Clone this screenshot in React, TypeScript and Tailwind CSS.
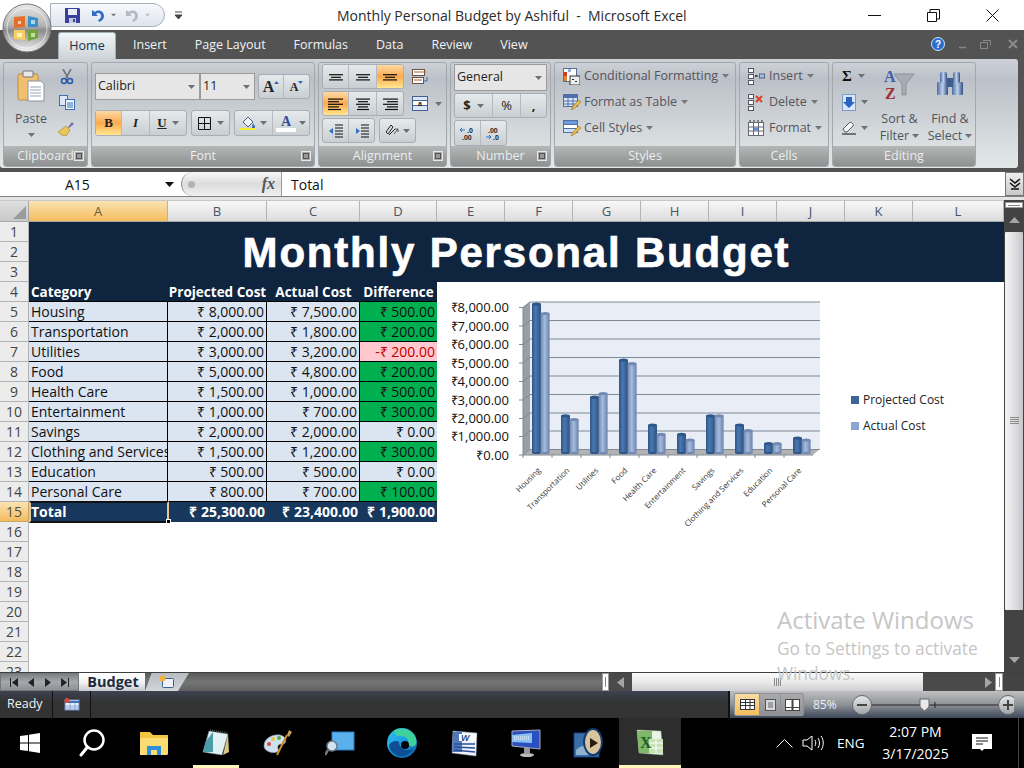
import React from "react";

const Caret = ({ c = "#6b7178", cls = "" }: { c?: string; cls?: string }) => (
  <svg width="7" height="4" viewBox="0 0 7 4" className={"shrink-0 " + cls}><path d="M0 0h7L3.5 4z" fill={c} /></svg>
);

const Lines = ({ rows }: { rows: [number, number][] }) => (
  <svg width="18" height="16" viewBox="0 0 18 16">
    {rows.map(([x, w], i) => (
      <rect key={i} x={x} y={i * 2.6 + 1 + (16 - rows.length * 2.6) / 2} width={w} height="1.2" fill="#111" />
    ))}
  </svg>
);

const Office = () => (
  <svg width="52" height="52" viewBox="0 0 52 52" className="absolute left-[1px] top-[2px] z-10">
    <defs>
      <linearGradient id="orb" x1="0" y1="0" x2="0" y2="1">
        <stop offset="0" stopColor="#e8e8e8" /><stop offset=".45" stopColor="#b3b3b3" /><stop offset=".55" stopColor="#8c8c8c" /><stop offset="1" stopColor="#f2f2f2" />
      </linearGradient>
    </defs>
    <circle cx="26" cy="26" r="24" fill="url(#orb)" stroke="#777" />
    <circle cx="26" cy="26" r="20" fill="none" stroke="#fff" strokeOpacity=".6" />
    <path d="M13 15l11-1v11l-11 1z" fill="#e2702c" /><path d="M17 19h3v3h-3z" fill="#f3c7a8" />
    <path d="M27 14l10 2v9H27z" fill="#3d8fc6" /><path d="M30 18h4v4h-4z" fill="#a9d6ee" />
    <path d="M13 28h11v10l-11-1z" fill="#f5cf62" /><path d="M16 31h5v4h-5z" fill="#fdf2c6" />
    <path d="M27 28h10v8l-10 3z" fill="#6fa63a" /><path d="M30 31h4v4h-4z" fill="#c2dfa2" />
  </svg>
);

const Save = () => (
  <svg width="15" height="15" viewBox="0 0 15 15"><path d="M0 0h14l1 1v14H0z" fill="#3a3f9c" /><path d="M3 1h9v6H3z" fill="#e8ecf6" /><path d="M4 10h7v5H4z" fill="#c3c9e0" /><path d="M8 11h2v3H8z" fill="#3a3f9c" /></svg>
);
const Undo = ({ c }: { c: string }) => (
  <svg width="13" height="13" viewBox="0 0 13 13"><path d="M1 1v6h6L5 5c2-2 5-1 5 2 0 2-1 3-3 4l1 2c3-1 5-3 5-6 0-5-6-7-9-4z" fill={c} /></svg>
);

const Tab = ({ t }: { t: string }) => <span className="px-[14px] text-[12.5px] text-[#eef2f6]">{t}</span>;

const Group = ({ w, label, launcher = true, children, ml = "ml-[3px]" }: { w: string; label: string; launcher?: boolean; children: React.ReactNode; ml?: string }) => (
  <div className={`${w} ${ml} flex h-[105px] shrink-0 flex-col overflow-hidden rounded-[3px] border border-[#a3a8ad] bg-gradient-to-b from-[#cdd1d7] via-[#bcc0c8] via-15% to-[#e3e9e9]`}>
    <div className="min-h-0 flex-1">{children}</div>
    <div className="relative flex h-[20px] items-center justify-center bg-gradient-to-b from-[#b5b7b7] to-[#8f9090] text-[12.5px] leading-none text-[#e9eef0]">
      {label}
      {launcher && (
        <svg width="10" height="10" viewBox="0 0 10 10" className="absolute right-[3px] top-[5px]"><rect x=".5" y=".5" width="9" height="9" fill="#aaa" stroke="#e8e8e8" /><rect x="2.5" y="2.5" width="5" height="5" fill="#999" stroke="#555" /></svg>
      )}
    </div>
  </div>
);

const BtnRow = ({ children, cls = "" }: { children: React.ReactNode; cls?: string }) => (
  <div className={"flex overflow-hidden rounded-[3px] border border-[#a8aeb3] bg-gradient-to-b from-[#e6eaec] to-[#c8ced2] " + cls}>{children}</div>
);
const Btn = ({ w, on, last, children }: { w: string; on?: boolean; last?: boolean; children: React.ReactNode }) => (
  <div className={`${w} flex items-center justify-center gap-[3px] ${last ? "" : "border-r border-[#b4babf]"} ${on ? "bg-gradient-to-b from-[#fcd9a2] via-[#fba94c] to-[#ffe78f]" : ""}`}>{children}</div>
);

const Select = ({ w, text }: { w: string; text: string }) => (
  <div className={`${w} flex h-full items-center justify-between border border-[#9b9b9b] bg-[#e6e6e6] pl-[2px] pr-[4px] text-[12.5px] text-[#222]`}>
    <span>{text}</span><Caret />
  </div>
);

const StyleItem = ({ icon, text }: { icon: React.ReactNode; text: string }) => (
  <div className="flex h-[26px] items-center text-[12.5px] text-[#57545c]">
    <div className="w-[21px] shrink-0">{icon}</div><span>{text}</span><Caret c="#777" cls="ml-[4px]" />
  </div>
);

const IconCF = () => (
  <svg width="17" height="17" viewBox="0 0 17 17"><rect x=".5" y=".5" width="13" height="13" fill="#fff" stroke="#5a6f96" /><path d="M1 4h3v4H1z" fill="#d9381e" /><path d="M1 8h3v5H1z" fill="#e87f2a" /><path d="M5 1h3v3H5z" fill="#8fb0d8" /><rect x="7" y="8" width="10" height="9" fill="#eee" stroke="#333" /><path d="M9 11h2v1H9zM12 13h2v1h-2z" fill="#222" /></svg>
);
const IconFT = () => (
  <svg width="18" height="17" viewBox="0 0 18 17"><rect x=".5" y=".5" width="14" height="12" fill="#dfe8f6" stroke="#4f6fa8" /><path d="M1 1h13v3H1z" fill="#4f6fa8" /><path d="M5 1v12M10 1v12M1 7h13M1 10h13" stroke="#4f6fa8" /><path d="M8 16l2-4 6-6 2 2-6 6z" fill="#e9b949" stroke="#8a6a1c" strokeWidth=".5" /></svg>
);
const IconCS = () => (
  <svg width="18" height="17" viewBox="0 0 18 17"><rect x=".5" y=".5" width="14" height="4" fill="#6f9bd8" stroke="#4f6fa8" /><rect x=".5" y="4.5" width="14" height="4" fill="#fff" stroke="#4f6fa8" /><rect x=".5" y="8.5" width="14" height="4" fill="#cfe0f6" stroke="#4f6fa8" /><path d="M8 16l2-4 6-6 2 2-6 6z" fill="#e9b949" stroke="#8a6a1c" strokeWidth=".5" /></svg>
);
const CellsBase = () => (
  <>
    <rect x=".5" y=".5" width="5" height="4" fill="#fff" stroke="#556" /><rect x=".5" y="6.5" width="5" height="4" fill="#fff" stroke="#556" /><rect x=".5" y="12.5" width="5" height="4" fill="#fff" stroke="#556" />
  </>
);
const IconInsert = () => (
  <svg width="17" height="17" viewBox="0 0 17 17"><CellsBase /><rect x="11.5" y="6" width="5" height="4" fill="#9cc2ea" stroke="#567" /><path d="M7 8h3M8 7v2" stroke="#223" /></svg>
);
const IconDelete = () => (
  <svg width="17" height="17" viewBox="0 0 17 17"><CellsBase /><path d="M8 2l6 6M14 2L8 8" stroke="#e0402a" strokeWidth="2" /></svg>
);
const IconFormat = () => (
  <svg width="17" height="17" viewBox="0 0 17 17"><rect x=".5" y="2.5" width="15" height="13" fill="#fff" stroke="#667" /><path d="M.5 7h15M.5 11h15M5.5 2.5v13M10.5 2.5v13" stroke="#667" /><rect x="6" y="7.5" width="4" height="3" fill="#5b8fdc" /><path d="M2 0v2M6 0v2M10 0v2M14 0v2" stroke="#333" /></svg>
);

const TaskIcon = ({ children, on, bar }: { children: React.ReactNode; on?: boolean; bar?: boolean }) => (
  <div className={`relative flex h-[50px] w-[62px] items-center justify-center ${on ? "bg-[#2d2d2d]" : ""}`}>
    {children}
    {bar && <div className="absolute bottom-0 left-[8px] right-[8px] h-[3px] bg-[#fdf6b8]" />}
    {on && <div className="absolute bottom-0 left-0 right-0 h-[3px] bg-[#fdf6b8]" />}
  </div>
);

const rows: [string, string, string, string, "g" | "p" | "n"][] = [
  ["Housing", "₹ 8,000.00", "₹ 7,500.00", "₹ 500.00", "g"],
  ["Transportation", "₹ 2,000.00", "₹ 1,800.00", "₹ 200.00", "g"],
  ["Utilities", "₹ 3,000.00", "₹ 3,200.00", "-₹ 200.00", "p"],
  ["Food", "₹ 5,000.00", "₹ 4,800.00", "₹ 200.00", "g"],
  ["Health Care", "₹ 1,500.00", "₹ 1,000.00", "₹ 500.00", "g"],
  ["Entertainment", "₹ 1,000.00", "₹ 700.00", "₹ 300.00", "g"],
  ["Savings", "₹ 2,000.00", "₹ 2,000.00", "₹ 0.00", "n"],
  ["Clothing and Services", "₹ 1,500.00", "₹ 1,200.00", "₹ 300.00", "g"],
  ["Education", "₹ 500.00", "₹ 500.00", "₹ 0.00", "n"],
  ["Personal Care", "₹ 800.00", "₹ 700.00", "₹ 100.00", "g"],
];

const cols: [string, string][] = [
  ["A", "w-[139px]"], ["B", "w-[99px]"], ["C", "w-[93px]"], ["D", "w-[77px]"], ["E", "w-[68px]"], ["F", "w-[68px]"],
  ["G", "w-[68px]"], ["H", "w-[68px]"], ["I", "w-[68px]"], ["J", "w-[68px]"], ["K", "w-[68px]"], ["L", "w-[91px]"],
];

const chartData: [string, number, number][] = [
  ["Housing", 8000, 7500], ["Transportation", 2000, 1800], ["Utilities", 3000, 3200], ["Food", 5000, 4800], ["Health Care", 1500, 1000],
  ["Entertainment", 1000, 700], ["Savings", 2000, 2000], ["Clothing and Services", 1500, 1200], ["Education", 500, 500], ["Personal Care", 800, 700],
];

const Cyl = ({ x, v, id, top }: { x: number; v: number; id: string; top: string }) => {
  const h = v * 0.0186;
  const y = 453 - h;
  return (
    <g>
      <rect x={x} y={y} width="9" height={h} fill={`url(#${id})`} />
      <ellipse cx={x + 4.5} cy={453} rx="4.5" ry="1" fill={top} />
      <ellipse cx={x + 4.5} cy={y} rx="4.5" ry="1.6" fill={top} />
    </g>
  );
};

const Chart = () => {
  const ys = [302, 320.5, 339, 357.5, 376, 394.5, 413, 431, 449.5];
  const labels = ["₹8,000.00", "₹7,000.00", "₹6,000.00", "₹5,000.00", "₹4,000.00", "₹3,000.00", "₹2,000.00", "₹1,000.00", "₹0.00"];
  return (
    <svg width="530" height="250" viewBox="440 290 530 250" className="absolute left-[440px] top-[90px]">
      <defs>
        <linearGradient id="p1"><stop offset="0" stopColor="#2f5688" /><stop offset=".4" stopColor="#4a78b0" /><stop offset="1" stopColor="#2c5181" /></linearGradient>
        <linearGradient id="p2"><stop offset="0" stopColor="#6f87ae" /><stop offset=".45" stopColor="#a6bbdf" /><stop offset="1" stopColor="#6a82aa" /></linearGradient>
      </defs>
      <path d="M530 302H820V449H530z" fill="#e8edf6" />
      <path d="M523 307l7-5V449l-7 6z" fill="#9a9fa5" />
      <path d="M523 455l7-6H820l-7 6z" fill="#b3b3b3" />
      {ys.map((y, i) => (
        <g key={i}>
          <path d={`M530 ${y}H820`} stroke="#7f8a96" strokeWidth="1" />
          <path d={`M519 ${y + 5.5}h4l7 -5.5`} stroke="#7f8a96" fill="none" />
          <text x="509" y={y + 10} textAnchor="end" fontSize="13" fontFamily="'Open Sans',sans-serif" fill="#111">{labels[i]}</text>
        </g>
      ))}
      <path d="M523 307V455H813" stroke="#7f8a96" fill="none" />
      {chartData.map(([n, a, b], i) => {
        const x = 532 + i * 29;
        return (
          <g key={n}>
            <path d={`M${x - 9} 455v3`} stroke="#7f8a96" />
            <Cyl x={x} v={a} id="p1" top="#2f5688" />
            <Cyl x={x + 8.6} v={b} id="p2" top="#7189b3" />
            <text transform={`translate(${x + 9} 471) rotate(-45)`} textAnchor="end" fontSize="8" fontFamily="'Open Sans',sans-serif" fill="#333">{n}</text>
          </g>
        );
      })}
      <rect x="851" y="396" width="8" height="8" fill="#3b659b" />
      <rect x="851" y="422" width="8" height="8" fill="#8ea7d2" />
      <text x="863" y="404" fontSize="12" fontFamily="'Open Sans',sans-serif" fill="#222">Projected Cost</text>
      <text x="863" y="430" fontSize="12" fontFamily="'Open Sans',sans-serif" fill="#222">Actual Cost</text>
    </svg>
  );
};

export default function App() {
  return (
    <div className="relative flex h-[768px] w-[1024px] flex-col overflow-hidden bg-[#535353] font-['Open_Sans',sans-serif]">
      {/* title bar */}
      <div className="flex h-[30px] items-center bg-white">
        <div className="ml-[50px] flex h-[24px] w-[115px] items-center gap-[3px] rounded-r-[12px] border border-[#a9b0bb] bg-gradient-to-b from-[#f7f9fc] to-[#dfe4ee] pl-[14px]">
          <Save />
          <div className="ml-[8px]"><Undo c="#2f6fc4" /></div>
          <Caret c="#777" cls="ml-[3px] scale-75" />
          <div className="ml-[5px]"><Undo c="#b3bac4" /></div>
          <Caret c="#bbb" cls="ml-[3px] scale-75" />
        </div>
        <svg width="8" height="9" viewBox="0 0 8 9" className="ml-[10px]"><path d="M0 1h7M0 4h7L3.5 8z" stroke="#444" fill="#444" /></svg>
        <div className="ml-[154px] whitespace-pre text-[14px] text-[#2b2b2b]">Monthly Personal Budget by Ashiful  -  Microsoft Excel</div>
        <div className="ml-auto mr-[25px] flex items-center gap-[46px]">
          <svg width="13" height="13" viewBox="0 0 13 13"><path d="M0 6.5h13" stroke="#111" /></svg>
          <svg width="13" height="13" viewBox="0 0 13 13"><path d="M.5 3.5h9v9h-9zM3 3V.5h9.5V10H10" stroke="#111" fill="none" /></svg>
          <svg width="13" height="13" viewBox="0 0 13 13"><path d="M.5.5l12 12M12.5.5l-12 12" stroke="#111" /></svg>
        </div>
      </div>
      <Office />

      {/* tabs */}
      <div className="relative flex h-[29px] items-end bg-[#535353] pl-[58px]">
        <div className="flex h-[27px] w-[58px] items-center justify-center rounded-t-[3px] border border-b-0 border-[#9fb2b8] bg-gradient-to-b from-[#f2f6f7] to-[#cdd3d8] text-[12.5px] text-[#15304f]">Home</div>
        <div className="ml-[3px] flex h-[28px] items-center">
          <Tab t="Insert" /><Tab t="Page Layout" /><Tab t="Formulas" /><Tab t="Data" /><Tab t="Review" /><Tab t="View" />
        </div>
        <div className="ml-auto mr-[6px] flex h-[28px] items-center gap-[13px] pb-[2px]">
          <svg width="14" height="14" viewBox="0 0 14 14"><circle cx="7" cy="7" r="6.5" fill="#2a6fd0" stroke="#cfe0f5" /><text x="7" y="10.5" textAnchor="middle" fontSize="10" fontWeight="700" fill="#fff" fontFamily="'Liberation Sans',sans-serif">?</text></svg>
          <svg width="9" height="9" viewBox="0 0 9 9"><path d="M1 7.5h7" stroke="#888" strokeWidth="1.5" /></svg>
          <svg width="11" height="9" viewBox="0 0 11 9"><path d="M.5 2.5h7v6h-7zM3 .5h7.5v5" stroke="#888" fill="none" /></svg>
          <svg width="10" height="10" viewBox="0 0 10 10" className="ml-[4px]"><path d="M1 1l8 8M9 1L1 9" stroke="#8d8d8d" strokeWidth="2" /></svg>
        </div>
      </div>

      {/* ribbon */}
      <div className="mr-[6px] flex h-[109px] items-start rounded-b-[3px] rounded-tr-[3px] bg-gradient-to-b from-[#cdd1d7] via-[#bcc0c8] via-20% to-[#e3e9e9] pt-[3px]">
        <Group w="w-[85px]" label="Clipboard" ml="ml-[3px]">
          <div className="flex">
            <div className="flex w-[54px] flex-col items-center pt-[7px]">
              <svg width="28" height="32" viewBox="0 0 28 32">
                <rect x="1" y="4" width="20" height="26" rx="2" fill="#f0c070" stroke="#c08a3c" />
                <rect x="6" y="1" width="10" height="6" rx="1" fill="#e8e8e8" stroke="#777" />
                <path d="M11 11h13l3 3v17H11z" fill="#fff" stroke="#8a94a3" />
                <path d="M13 17h11M13 20h11M13 23h11M13 26h11" stroke="#9aa5b5" />
              </svg>
              <span className="mt-[9px] text-[12.5px] leading-[16px] text-[#4e5560]">Paste</span>
              <Caret cls="mt-[6px]" />
            </div>
            <div className="flex flex-col items-center gap-[10px] pt-[6px]">
              <svg width="14" height="16" viewBox="0 0 14 16"><path d="M3 0l5 9M11 0L6 9" stroke="#6f7680" strokeWidth="1.6" /><circle cx="4" cy="12" r="2.5" fill="none" stroke="#2a5bb0" strokeWidth="1.6" /><circle cx="10" cy="12" r="2.5" fill="none" stroke="#2a5bb0" strokeWidth="1.6" /></svg>
              <svg width="16" height="15" viewBox="0 0 16 15"><rect x=".5" y=".5" width="8" height="10" fill="#dce8f8" stroke="#3b6fb5" /><rect x="6.5" y="4.5" width="9" height="10" fill="#eef4fd" stroke="#3b6fb5" /><path d="M8 8h6M8 10h6M8 12h6" stroke="#3b6fb5" /></svg>
              <svg width="17" height="16" viewBox="0 0 17 16"><path d="M10 7l4-5 2 2-5 4z" fill="#7d6ab0" /><path d="M0 12l8-6 4 4-4 6c-3 0-6-2-8-4z" fill="#e9c75c" stroke="#9a7f2a" strokeWidth=".6" /></svg>
            </div>
          </div>
        </Group>

        <Group w="w-[224px]" label="Font">
          <div className="box-content flex h-[27px] items-center pl-[3px] pt-[10px]">
            <Select w="w-[105px]" text="Calibri" />
            <Select w="w-[55px]" text="11" />
            <BtnRow cls="ml-[3px] h-[25px]">
              <Btn w="w-[25px]"><span className="font-['Liberation_Serif',serif] text-[16px] font-bold leading-none text-[#222]">A</span><svg width="5" height="3" viewBox="0 0 5 3" className="-ml-[3px] -mt-[9px]"><path d="M0 3h5L2.500 0z" fill="#3768b0" /></svg></Btn>
              <Btn w="w-[25px]" last><span className="font-['Liberation_Serif',serif] text-[12px] font-bold leading-none text-[#222]">A</span><svg width="5" height="3" viewBox="0 0 5 3" className="-ml-[3px] -mt-[9px]"><path d="M0 0h5L2.500 3z" fill="#3768b0" /></svg></Btn>
            </BtnRow>
          </div>
          <div className="mt-[10px] flex h-[26px] items-center pl-[3px]">
            <BtnRow cls="h-[26px]">
              <Btn w="w-[26px]" on><span className="font-['Liberation_Serif',serif] text-[13px] font-bold text-[#222]">B</span></Btn>
              <Btn w="w-[28px]"><span className="font-['Liberation_Serif',serif] text-[13px] font-bold italic text-[#222]">I</span></Btn>
              <Btn w="w-[36px]" last><span className="font-['Liberation_Serif',serif] text-[13px] font-bold text-[#222] underline">U</span><Caret cls="ml-[2px]" /></Btn>
            </BtnRow>
            <BtnRow cls="ml-[4px] h-[26px]">
              <Btn w="w-[37px]" last><svg width="13" height="13" viewBox="0 0 13 13"><path d="M.5.5h12v12H.5zM6.500 .5v12M.5 6.500h12" fill="none" stroke="#111" /></svg><Caret cls="ml-[3px]" /></Btn>
            </BtnRow>
            <BtnRow cls="ml-[4px] h-[26px]">
              <Btn w="w-[38px]"><svg width="17" height="17" viewBox="0 0 17 17"><path d="M3 7l5-5 5 5-5 5z" fill="#eef4fb" stroke="#4a5a78" /><path d="M13 8c1 2 2 3 2 4 0 2-3 2-3 0 0-1 1-3 1-4z" fill="#3a6ab0" /><rect x="0" y="13" width="16" height="2" fill="#f4ee30" /></svg><Caret /></Btn>
              <Btn w="w-[36px]" last><div className="flex flex-col items-center"><span className="font-['Liberation_Serif',serif] text-[14px] font-bold leading-[13px] text-[#2e4f95]">A</span><div className="h-[4px] w-[20px] bg-white" /></div><Caret /></Btn>
            </BtnRow>
          </div>
        </Group>

        <Group w="w-[129px]" label="Alignment">
          <div className="flex flex-col gap-[2px] pl-[3px] pt-[1px]">
            <div className="flex h-[25px] items-center">
              <BtnRow cls="h-[25px]">
                <Btn w="w-[26px]"><Lines rows={[[2, 14], [4, 10], [2, 14]]} /></Btn>
                <Btn w="w-[28px]"><Lines rows={[[2, 14], [4, 10], [2, 14]]} /></Btn>
                <Btn w="w-[26px]" on last><Lines rows={[[2, 14], [4, 10], [2, 14]]} /></Btn>
              </BtnRow>
              <svg width="18" height="16" viewBox="0 0 18 16" className="ml-[8px]"><rect x=".5" y=".5" width="12" height="6" fill="#fff" stroke="#6c5040" /><rect x=".5" y="8.500" width="11" height="6" fill="#fff" stroke="#6c5040" /><path d="M2 3h12M2 11h8" stroke="#b0602a" /><path d="M15 8v4h-3" stroke="#3c6fb5" fill="none" /></svg>
            </div>
            <div className="flex h-[25px] items-center">
              <BtnRow cls="h-[25px]">
                <Btn w="w-[26px]" on><Lines rows={[[1, 15], [1, 11], [1, 15], [1, 11], [1, 13]]} /></Btn>
                <Btn w="w-[28px]"><Lines rows={[[2, 14], [4, 10], [2, 14], [4, 10], [3, 12]]} /></Btn>
                <Btn w="w-[26px]" last><Lines rows={[[2, 15], [6, 11], [2, 15], [6, 11], [4, 13]]} /></Btn>
              </BtnRow>
              <svg width="17" height="15" viewBox="0 0 17 15" className="ml-[8px]"><rect x=".5" y=".5" width="15" height="14" fill="#dbe6f4" stroke="#44628f" /><rect x=".5" y="4.500" width="15" height="5" fill="#fff" stroke="#44628f" /><text x="8" y="9.500" textAnchor="middle" fontSize="6.500" fontWeight="700" fill="#111" fontFamily="'Liberation Sans',sans-serif">a</text></svg>
              <Caret cls="ml-[6px]" />
            </div>
            <div className="flex h-[25px] items-center">
              <BtnRow cls="h-[25px]">
                <Btn w="w-[26px]"><svg width="16" height="14" viewBox="0 0 16 14"><path d="M7 1h8M7 4h8M7 7h8M7 10h8M7 13h8" stroke="#111" /><path d="M1 7l4-3v6z" fill="#2e6fc4" /></svg></Btn>
                <Btn w="w-[25px]" last><svg width="16" height="14" viewBox="0 0 16 14"><path d="M7 1h8M7 4h8M7 7h8M7 10h8M7 13h8" stroke="#111" /><path d="M6 7L2 4v6z" fill="#2e6fc4" /></svg></Btn>
              </BtnRow>
              <BtnRow cls="ml-[4px] h-[25px]">
                <Btn w="w-[35px]" last><svg width="15" height="15" viewBox="0 0 15 15"><path d="M1 9l5-7 2 2-5 7zM4 12l6-6" stroke="#222" fill="none" /><path d="M9 11l4-5M13 6v3M13 6h-3" stroke="#555" fill="none" /></svg><Caret /></Btn>
              </BtnRow>
            </div>
          </div>
        </Group>

        <Group w="w-[101px]" label="Number">
          <div className="flex flex-col gap-[2px] pl-[3px] pt-[1px]">
            <div className="h-[27px]"><Select w="w-[93px]" text="General" /></div>
            <BtnRow cls="h-[25px] w-[93px]">
              <Btn w="w-[38px]"><span className="text-[13px] font-bold leading-none text-[#222]">$</span><Caret cls="ml-[3px]" /></Btn>
              <Btn w="w-[28px]"><span className="text-[13px] leading-none text-[#222]">%</span></Btn>
              <Btn w="w-[25px]" last><span className="text-[13px] font-bold leading-none text-[#222]">,</span></Btn>
            </BtnRow>
            <BtnRow cls="h-[26px] w-[53px]">
              <Btn w="w-[26px]"><svg width="18" height="15" viewBox="0 0 18 15"><path d="M1 4h5M3 2L1 4l2 2" stroke="#2e6fc4" fill="none" /><text x="8" y="7" fontSize="7" fontWeight="700" fill="#222" fontFamily="'Liberation Sans',sans-serif">.0</text><text x="3" y="14" fontSize="7" fontWeight="700" fill="#222" fontFamily="'Liberation Sans',sans-serif">.00</text></svg></Btn>
              <Btn w="w-[25px]" last><svg width="18" height="15" viewBox="0 0 18 15"><text x="3" y="7" fontSize="7" fontWeight="700" fill="#222" fontFamily="'Liberation Sans',sans-serif">.00</text><path d="M1 11h5M4 9l2 2-2 2" stroke="#2e6fc4" fill="none" /><text x="8" y="14" fontSize="7" fontWeight="700" fill="#222" fontFamily="'Liberation Sans',sans-serif">.0</text></svg></Btn>
            </BtnRow>
          </div>
        </Group>

        <Group w="w-[182px]" label="Styles" launcher={false}>
          <div className="flex flex-col pl-[8px]">
            <StyleItem icon={<IconCF />} text="Conditional Formatting" />
            <StyleItem icon={<IconFT />} text="Format as Table" />
            <StyleItem icon={<IconCS />} text="Cell Styles" />
          </div>
        </Group>

        <Group w="w-[90px]" label="Cells" launcher={false}>
          <div className="flex flex-col pl-[8px]">
            <StyleItem icon={<IconInsert />} text="Insert" />
            <StyleItem icon={<IconDelete />} text="Delete" />
            <StyleItem icon={<IconFormat />} text="Format" />
          </div>
        </Group>

        <Group w="w-[144px]" label="Editing" launcher={false}>
          <div className="flex">
            <div className="flex w-[41px] flex-col pl-[9px]">
              <div className="flex h-[26px] items-center gap-[6px]"><span className="font-['Liberation_Serif',serif] text-[15px] font-bold leading-none text-[#111]">Σ</span><Caret /></div>
              <div className="flex h-[26px] items-center gap-[5px]"><svg width="14" height="17" viewBox="0 0 14 17"><rect x=".5" y=".5" width="13" height="16" fill="#d9e6f7" stroke="#7b9bc6" /><path d="M4 3h6v5h3l-6 6-6-6h3z" fill="#2a63c0" /></svg><Caret /></div>
              <div className="flex h-[26px] items-center gap-[5px]"><svg width="14" height="14" viewBox="0 0 14 14"><path d="M1 8l6-6c1-1 2-1 3 0s2 2 1 3l-6 6H3z" fill="#f4f4f4" stroke="#555" /><path d="M0 13h14" stroke="#111" /></svg><Caret /></div>
            </div>
            <div className="flex w-[51px] flex-col items-center pt-[6px] text-[12.5px] leading-[17px] text-[#4e5560]">
              <svg width="31" height="32" viewBox="0 0 31 32">
                <text x="0" y="13" fontSize="16" fontWeight="700" fill="#3d5ea8" fontFamily="'Liberation Serif',serif">A</text>
                <text x="1" y="30" fontSize="16" fontWeight="700" fill="#a03030" fontFamily="'Liberation Serif',serif">Z</text>
                <path d="M10 5h20l-8 10v11h-4V15z" fill="#a8adb3" stroke="#737980" strokeWidth=".6" />
              </svg>
              <span className="mt-[9px]">Sort &amp;</span>
              <span className="flex items-center gap-[3px]">Filter <Caret /></span>
            </div>
            <div className="flex w-[50px] flex-col items-center pt-[6px] text-[12.5px] leading-[17px] text-[#4e5560]">
              <svg width="28" height="32" viewBox="0 0 28 32">
                <defs><linearGradient id="bn" x1="0" x2="1"><stop offset="0" stopColor="#4a6aa0" /><stop offset=".5" stopColor="#bcd0ea" /><stop offset="1" stopColor="#2f4d80" /></linearGradient></defs>
                <rect x="1" y="13" width="11" height="13" rx="1" fill="url(#bn)" /><rect x="16" y="13" width="11" height="13" rx="1" fill="url(#bn)" />
                <rect x="4" y="3" width="7" height="11" rx="2" fill="url(#bn)" /><rect x="17" y="3" width="7" height="11" rx="2" fill="url(#bn)" />
                <rect x="11" y="9" width="6" height="9" fill="#3d5c90" />
              </svg>
              <span className="mt-[9px]">Find &amp;</span>
              <span className="flex items-center gap-[3px]">Select <Caret /></span>
            </div>
          </div>
        </Group>
      </div>

      {/* formula bar */}
      <div className="mt-[4px] flex h-[25px] items-stretch border-b border-[#808080] bg-white">
        <div className="relative flex w-[177px] items-center pl-[65px] text-[14px] text-[#111]">
          A15
          <svg width="9" height="5" viewBox="0 0 9 5" className="absolute right-[3px] top-[10px]"><path d="M0 0h9L4.500 5z" fill="#111" /></svg>
        </div>
        <div className="ml-[4px] flex w-[100px] items-center justify-between rounded-l-[12px] border-l border-[#8f8f8f] bg-gradient-to-b from-[#f8f8f8] via-[#dcdcdc] to-[#f0f0f0] pl-[6px] pr-[6px]">
          <div className="h-[7px] w-[7px] rounded-full bg-[#b0b4b8]" />
          <span className="font-['Liberation_Serif',serif] text-[16px] font-bold italic leading-none text-[#555]">fx</span>
        </div>
        <div className="flex flex-1 items-center border-l border-[#9a9a9a] pl-[9px] text-[14px] text-[#111]">Total</div>
        <div className="flex w-[19px] items-center justify-center border border-[#777] bg-gradient-to-b from-[#eee] to-[#c9c9c9]">
          <svg width="12" height="13" viewBox="0 0 12 13"><path d="M1 1l5 4 5-4M1 5l5 4 5-4" stroke="#111" strokeWidth="1.6" fill="none" /><path d="M2 11h8" stroke="#111" strokeWidth="1.5" /></svg>
        </div>
      </div>
      <div className="h-[3px] bg-[#e4e4e4]" />

      {/* sheet */}
      <div className="flex h-[472px] bg-[#444]">
        <div className="relative w-[1004px] overflow-hidden bg-white">
          <div className="flex h-[22px] border-y border-[#a8a8a8] border-t-[#c8c8c8]">
            <div className="flex w-[29px] items-end justify-end border-r border-[#a9a9a9] bg-gradient-to-b from-[#dfdfdf] to-[#c9c9c9] p-[2px]">
              <svg width="13" height="13" viewBox="0 0 13 13"><path d="M13 0v13H0z" fill="#9b9b9b" /></svg>
            </div>
            {cols.map(([c, w], i) => (
              <div key={c} className={`${w} flex items-center justify-center border-r border-[#b4b4b4] text-[13px] leading-none ${i === 0 ? "bg-gradient-to-b from-[#fbe3b2] to-[#f3bc5c] text-[#6b5a3c]" : "bg-gradient-to-b from-[#f8f8f8] to-[#dcdcdc] text-[#44556a]"}`}>{c}</div>
            ))}
          </div>
          <div className="flex">
            <div className="w-[29px] shrink-0">
              {Array.from({ length: 23 }, (_, i) => (
                <div key={i} className={`flex h-[20px] items-center justify-center border-b border-r text-[14px] leading-none ${i === 14 ? "border-[#c4a56a] bg-gradient-to-b from-[#fbe3b2] to-[#f3bc5c] text-[#554]" : "border-[#b3b3b3] bg-[#ececec] text-[#444]"}`}>{i + 1}</div>
              ))}
            </div>
            <div className="flex-1">
              <div className="flex h-[60px] items-center justify-center whitespace-pre bg-[#0f243e] font-['Liberation_Sans',sans-serif] text-[42px] font-bold tracking-[1.8px] text-white [-webkit-text-stroke:0.7px_white]">
                Monthly Personal Budget
              </div>
              <div className="w-[408px]">
                <div className="grid h-[20px] grid-cols-[139px_99px_93px_77px] border-b border-black bg-[#0f243e] text-[13.5px] font-bold leading-[21px] text-white">
                  <div className="pl-[2px]">Category</div>
                  <div className="overflow-hidden whitespace-nowrap text-center">Projected Cost</div>
                  <div className="overflow-hidden whitespace-nowrap text-center">Actual Cost</div>
                  <div className="overflow-hidden whitespace-nowrap text-center">Difference</div>
                </div>
                {rows.map(([a, b, c, d, s]) => (
                  <div key={a} className="grid h-[20px] grid-cols-[139px_99px_93px_77px] bg-[#dbe5f1] text-[14px] leading-[19px] text-[#111]">
                    <div className="overflow-hidden whitespace-nowrap border-b border-r border-black pl-[2px]">{a}</div>
                    <div className="border-b border-r border-black pr-[2px] text-right">{b}</div>
                    <div className="border-b border-r border-black pr-[2px] text-right">{c}</div>
                    <div className={`border-b border-black pr-[2px] text-right ${s === "g" ? "bg-[#00b050]" : s === "p" ? "bg-[#ffc7ce] text-[#c00000]" : ""}`}>{d}</div>
                  </div>
                ))}
                <div className="relative grid h-[20px] grid-cols-[139px_99px_93px_77px] bg-[#17375d] text-[14px] font-bold leading-[19px] text-white">
                  <div className="pl-[2px]">Total</div>
                  <div className="pr-[2px] text-right">₹ 25,300.00</div>
                  <div className="pr-[2px] text-right">₹ 23,400.00</div>
                  <div className="pr-[2px] text-right">₹ 1,900.00</div>
                  <div className="absolute -top-[1px] left-0 h-[22px] w-[140px] border-2 border-[#e3c798] border-b-[#111] border-t-[#111]" />
                  <div className="absolute -bottom-[2px] left-[137px] h-[5px] w-[5px] border border-white bg-black" />
                </div>
              </div>
            </div>
          </div>
          <Chart />
        </div>
        <div className="relative flex w-[20px] flex-col items-center bg-[#434343]">
          <div className="mt-[2px] flex h-[6px] w-[18px] items-center justify-center border border-[#999] bg-white"><div className="h-px w-[12px] bg-[#888]" /></div>
          <div className="flex h-[24px] items-center justify-center"><svg width="11" height="6" viewBox="0 0 11 6"><path d="M0 6h11L5.500 0z" fill="#a5a5a5" /></svg></div>
          <div className="flex h-[378px] w-[18px] items-center justify-center rounded-[1px] bg-gradient-to-r from-[#f4f4f4] via-[#e0e0e0] to-[#c6c6cc]">
            <svg width="9" height="8" viewBox="0 0 9 8"><path d="M0 .5h9M0 2.500h9M0 4.500h9M0 6.500h9" stroke="#8a8a8a" /></svg>
          </div>
          <div className="mt-[47px] flex h-[6px] items-center justify-center"><svg width="11" height="6" viewBox="0 0 11 6"><path d="M0 0h11L5.500 6z" fill="#a5a5a5" /></svg></div>
        </div>
      </div>

      {/* sheet tabs */}
      <div className="flex h-[19px] items-stretch border-t border-[#3f3f3f] bg-gradient-to-b from-[#5a5a5a] via-[#757575] to-[#606060]">
        <div className="flex w-[79px] items-center justify-around border border-[#777] bg-gradient-to-b from-[#7d7f83] via-[#a5a8ac] to-[#8d9094] px-[4px]">
          {["M8 0v9L2 4.500zM0 0h1v9H0z", "M7 0v9L1 4.500z", "M1 0v9l6-4.500z", "M0 0v9l6-4.500zM7 0h1v9H7z"].map((d) => (
            <svg key={d} width="8" height="9" viewBox="0 0 8 9"><path d={d} fill="#222" /></svg>
          ))}
        </div>
        <div className="flex w-[66px] items-center justify-center bg-gradient-to-b from-[#ffffff] via-[#f2f4f6] to-[#c6cad0] pl-[2px] text-[14.5px] font-bold leading-none text-[#1e2b3c]">Budget</div>
        <div className="flex w-[44px] items-center justify-center bg-gradient-to-b from-[#b9bcc0] to-[#d2d5d9] [clip-path:polygon(15%_0,100%_0,75%_100%,0_100%)]">
          <svg width="16" height="15" viewBox="0 0 16 15"><rect x="3.500" y="3.500" width="11" height="9" rx="1" fill="#eef2f8" stroke="#3d5f8f" /><circle cx="3.500" cy="3.500" r="3" fill="#f3b040" /></svg>
        </div>
        <div className="ml-[413px] flex w-[7px] items-center justify-center border border-[#999] bg-white"><div className="h-[10px] w-px bg-[#888]" /></div>
        <div className="flex w-[23px] items-center justify-center bg-[#4a4a4a]"><svg width="7" height="11" viewBox="0 0 7 11"><path d="M7 0v11L0 5.500z" fill="#a5a5a5" /></svg></div>
        <div className="flex w-[291px] items-center justify-center bg-gradient-to-b from-[#fbfbfb] via-[#eaeaea] to-[#cfcfd4]">
          <svg width="8" height="8" viewBox="0 0 8 8"><path d="M.5 0v8M2.500 0v8M4.500 0v8M6.500 0v8" stroke="#8a8a8a" /></svg>
        </div>
        <div className="flex w-[72px] items-center justify-end bg-[#4a4a4a] pr-[3px]"><svg width="7" height="11" viewBox="0 0 7 11"><path d="M0 0v11l7-5.500z" fill="#a5a5a5" /></svg></div>
        <div className="flex w-[8px] items-center justify-center border border-[#999] bg-white"><div className="h-[10px] w-px bg-[#888]" /></div>
        <div className="flex-1 bg-[#434343]" />
      </div>

      {/* status bar */}
      <div className="flex h-[27px] bg-gradient-to-b from-[#3d4351] via-[#333] via-40% to-[#333]">
        <div className="flex h-full w-[53px] items-center border-r border-[#111] pl-[7px] text-[12.5px] text-[#eef2f6]">Ready</div>
        <div className="flex w-[38px] items-center justify-center border-r border-[#111]">
          <svg width="16" height="13" viewBox="0 0 16 13"><rect x="1" y="2" width="14" height="10" fill="#eef3fb" stroke="#6a8ac0" /><path d="M1 3h14v2H1z" fill="#3f70bd" /><path d="M1 8h14M1 10h14M6 5v7M11 5v7" stroke="#8aa8d8" /><circle cx="3" cy="2.500" r="2.500" fill="#d94a38" /></svg>
        </div>
        <div className="ml-[637px] flex w-[296px] items-center border-l-2 border-[#111] bg-gradient-to-b from-[#bfc0c0] via-[#8f9398] to-[#3e4859] pl-[4px]">
          <div className="flex h-[23px] w-[70px] overflow-hidden rounded-[2px] border border-[#8e9196] bg-gradient-to-b from-[#a8aaac] to-[#8f9194]">
            <div className="flex w-[24px] items-center justify-center bg-gradient-to-b from-[#f8dca4] to-[#f5bd59]">
              <svg width="15" height="11" viewBox="0 0 15 11"><rect x=".5" y=".5" width="14" height="10" fill="#fff" stroke="#333" /><path d="M.5 3.500h14M.5 6.500h14M5.500 .5v10M10 .5v10" stroke="#333" /></svg>
            </div>
            <div className="flex w-[22px] items-center justify-center border-x border-[#8e9196]"><svg width="11" height="12" viewBox="0 0 11 12"><rect x=".5" y=".5" width="10" height="11" fill="#d8d8d8" stroke="#555" /><path d="M3 4h5M3 6h5M3 8h5" stroke="#666" /></svg></div>
            <div className="flex flex-1 items-center justify-center"><svg width="15" height="12" viewBox="0 0 15 12"><rect x=".5" y=".5" width="14" height="11" fill="#fff" stroke="#444" /><path d="M7.500 0v12" stroke="#444" strokeWidth="2" /><path d="M0 8.500h15" stroke="#444" /></svg></div>
          </div>
          <span className="ml-[9px] text-[12px] text-[#e6eef8]">85%</span>
          <svg width="163" height="25" viewBox="0 0 163 25" className="ml-[14px]">
            <defs><linearGradient id="z" x1="0" y1="0" x2="0" y2="1"><stop offset="0" stopColor="#e8e8e8" /><stop offset="1" stopColor="#a0a4a8" /></linearGradient></defs>
            <path d="M20 13H147" stroke="#222" /><path d="M84 10v6" stroke="#222" />
            <circle cx="11" cy="13" r="9.500" fill="url(#z)" stroke="#666" /><path d="M6 13h10" stroke="#444" strokeWidth="2" />
            <circle cx="157" cy="13" r="9.500" fill="url(#z)" stroke="#666" /><path d="M152 13h10M157 8v10" stroke="#444" strokeWidth="2" />
            <path d="M69 7h9v8l-4.500 4-4.500-4z" fill="#e8e8e8" stroke="#666" />
          </svg>
        </div>
      </div>

      {/* taskbar */}
      <div className="flex h-[50px] items-center bg-black text-white">
        <div className="flex w-[60px] justify-center">
          <svg width="20" height="20" viewBox="0 0 20 20"><path d="M0 3l8-1v7.500H0zM9 1.800L20 0v9.500H9zM0 10.500h8V18l-8-1zM9 10.500h11V20L9 18.300z" fill="#fff" /></svg>
        </div>
        <div className="flex w-[63px] justify-center">
          <svg width="26" height="28" viewBox="0 0 26 28"><circle cx="15" cy="11" r="9.500" fill="none" stroke="#fff" strokeWidth="2.500" /><path d="M8.500 18L2 26" stroke="#fff" strokeWidth="3" strokeLinecap="round" /></svg>
        </div>
        <TaskIcon>
          <svg width="28" height="24" viewBox="0 0 28 24"><path d="M0 1h10l3 3h15v18a2 2 0 0 1-2 2H0z" fill="#f4c542" /><path d="M0 7h28v15a2 2 0 0 1-2 2H0z" fill="#fbdc74" /><path d="M7 24V15h14v9h-4v-5h-6v5z" fill="#2f8fd8" /></svg>
        </TaskIcon>
        <TaskIcon bar>
          <svg width="28" height="28" viewBox="0 0 28 28"><path d="M7 2l19 3-6 21-19-3z" fill="#dff1f2" stroke="#7a8a8a" strokeWidth=".5" /><path d="M4 12l7-9v20l-10 0z" fill="#4d9da8" /><path d="M8 1l18 3" stroke="#555" strokeWidth="1.500" strokeDasharray="1 1" /><path d="M26 5l1 18-6 3z" fill="#d8c78a" /></svg>
        </TaskIcon>
        <TaskIcon>
          <svg width="30" height="28" viewBox="0 0 30 28"><path d="M1 17C1 9 10 5 17 6c5 1 7 5 5 8-2 2-6 0-7 3s2 4-1 6c-5 2-13-1-13-6z" fill="#cfe0ee" stroke="#7d9ab3" strokeWidth=".6" /><circle cx="6" cy="15" r="2" fill="#d94a38" /><circle cx="10" cy="10" r="2" fill="#e8c63c" /><circle cx="16" cy="9" r="2" fill="#5aa846" /><path d="M14 26L24 6" stroke="#d68a28" strokeWidth="2" /><path d="M24 6l2-5 3 2-3 5z" fill="#c9a060" /></svg>
        </TaskIcon>
        <TaskIcon>
          <svg width="30" height="28" viewBox="0 0 30 28"><rect x="7" y="3" width="22" height="18" fill="#5ab0ec" stroke="#2d7cc0" /><circle cx="7" cy="17" r="5" fill="#cfe3f3" stroke="#6b7a88" strokeWidth="1.500" /><path d="M3 21l-3 5" stroke="#777" strokeWidth="2.500" /></svg>
        </TaskIcon>
        <TaskIcon>
          <svg width="30" height="30" viewBox="0 0 30 30">
            <defs><linearGradient id="ed" x1="0" y1="0" x2="1" y2="1"><stop offset="0" stopColor="#35c1f1" /><stop offset=".5" stopColor="#1b9de2" /><stop offset="1" stopColor="#0c59a4" /></linearGradient></defs>
            <circle cx="15" cy="15" r="15" fill="url(#ed)" />
            <path d="M7 3c7-5 17-2 21 5 2 4 2 9-1 10-2 1-5 0-6-2 1-3-1-8-7-8-3 0-5 1-7-5z" fill="#3fd0a0" />
            <path d="M12 14c0 5 5 9 10 8 2 0 4-1 5-2-3 6-10 10-16 8-6-2-9-7-9-11 2-4 8-5 10-3z" fill="#0c4f95" />
            <ellipse cx="18" cy="17" rx="4" ry="4" fill="#000" />
          </svg>
        </TaskIcon>
        <TaskIcon>
          <svg width="28" height="28" viewBox="0 0 28 28"><path d="M3 2l24 2-1 23-24-3z" fill="#eef3fb" stroke="#99a" strokeWidth=".5" /><path d="M3 3l9-1v21H2z" fill="#5078bc" /><path d="M9 5h17v7H9z" fill="#fff" /><text x="11" y="12" fontSize="9" fontWeight="700" fontStyle="italic" fill="#2a4f96" fontFamily="'Liberation Sans',sans-serif">W</text><path d="M4 15l21 0M4 18l21 1M4 21l21 2" stroke="#2a4f96" strokeWidth="1.500" /></svg>
        </TaskIcon>
        <TaskIcon>
          <svg width="30" height="30" viewBox="0 0 30 30"><path d="M1 3l28-1v19L1 18z" fill="#2a4fc0" stroke="#aab" /><path d="M1 7l20-2v10L1 14z" fill="#8cc0ee" /><path d="M3 9h16M3 11h16" stroke="#fff" strokeDasharray="1 1" /><ellipse cx="16" cy="27" rx="7" ry="2" fill="#bbb" /><path d="M13 20h6v6h-6z" fill="#999" /></svg>
        </TaskIcon>
        <TaskIcon>
          <svg width="30" height="30" viewBox="0 0 30 30"><rect x="1" y="5" width="25" height="24" fill="#3a6ea8" stroke="#1c3f80" /><path d="M3 22c6-6 12-6 20 0v5H3z" fill="#8cb4cc" /><ellipse cx="20" cy="14" rx="9" ry="13" fill="#d9c4a0" stroke="#123a70" strokeWidth="2" /><path d="M17 10l8 5-8 5z" fill="#2a1a10" /></svg>
        </TaskIcon>
        <TaskIcon on>
          <svg width="30" height="28" viewBox="0 0 30 28"><path d="M2 1l24 1 2 24-24-2z" fill="#eaf4e4" stroke="#8aa87a" strokeWidth=".5" /><path d="M2 2l15 0 0 22-13 0z" fill="#7fb86a" /><path d="M14 10h14v14H14z" fill="#c7e2b4" /><path d="M14 14h14M14 19h14M21 10v14" stroke="#fff" /><text x="5" y="19" fontSize="16" fontWeight="700" fill="#1d5f24" fontFamily="'Liberation Serif',serif">X</text></svg>
        </TaskIcon>
        <div className="ml-[95px] flex items-center">
          <svg width="17" height="9" viewBox="0 0 17 9"><path d="M.5 8.500l8-8 8 8" stroke="#fff" fill="none" /></svg>
          <svg width="22" height="16" viewBox="0 0 22 16" className="ml-[9px]"><path d="M1 5h4l5-4v14l-5-4H1z" stroke="#fff" fill="none" /><path d="M13 5c1 2 1 4 0 6M16 3c2 3 2 7 0 10M19 1c3 4 3 10 0 14" stroke="#fff" fill="none" /></svg>
          <span className="ml-[13px] text-[13.5px]">ENG</span>
          <div className="ml-[16px] flex w-[70px] flex-col items-center text-[14px] leading-[22px]">
            <span>2:07 PM</span>
            <span>3/17/2025</span>
          </div>
          <svg width="20" height="20" viewBox="0 0 20 20" className="ml-[22px]"><path d="M0 1h20v15h-8l-2 2-2-2H0z" fill="#fff" /><path d="M4 5h12M4 8h12M4 11h7" stroke="#111" /></svg>
        </div>
        <div className="ml-auto mr-[5px] h-[50px] w-px bg-[#444]" />
      </div>

      {/* activation watermark lies over the sheet and its scroll bar */}
      <div className="pointer-events-none absolute left-[777px] top-[604px] z-10 text-[#c6c6c6]">
        <div className="text-[24px] leading-[32px]">Activate Windows</div>
        <div className="text-[17.3px] leading-[26px]">Go to Settings to activate</div>
        <div className="text-[17.3px] leading-[24px]">Windows.</div>
      </div>
    </div>
  );
}
